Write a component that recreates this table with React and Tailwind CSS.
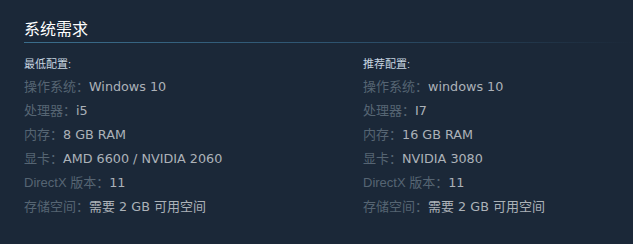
export default function App() {
  const left = [
    ["操作系统：", "Windows 10"],
    ["处理器：", "i5"],
    ["内存：", "8 GB RAM"],
    ["显卡：", "AMD 6600 / NVIDIA 2060"],
    ["DirectX 版本：", "11"],
    ["存储空间：", null],
  ];
  const right = [
    ["操作系统：", "windows 10"],
    ["处理器：", "I7"],
    ["内存：", "16 GB RAM"],
    ["显卡：", "NVIDIA 3080"],
    ["DirectX 版本：", "11"],
    ["存储空间：", null],
  ];
  const Storage = () => (
    <span className="text-[13px]">
      需要<span className="text-[12.75px]"> 2 GB </span>可用空间
    </span>
  );
  const Col = ({ title, rows, w }) => (
    <div className={w}>
      <div className="h-4 leading-4 text-[11px] text-[#c7d5e0] font-['Liberation_Sans','Noto_Sans_CJK_SC',sans-serif]">
        {title}
      </div>
      <ul className="mt-[3px]">
        {rows.map(([k, v], i) => (
          <li key={i} className="h-6 leading-6 flex items-center whitespace-nowrap">
            <span className="text-[13px] text-[#566573] font-['Liberation_Sans','Noto_Sans_CJK_SC',sans-serif]">
              {k}
            </span>
            <span className="text-[12.75px] text-[#acb2b8] font-['DejaVu_Sans','Noto_Sans_CJK_SC',sans-serif]">
              {v === null ? <Storage /> : v}
            </span>
          </li>
        ))}
      </ul>
    </div>
  );
  return (
    <div className="w-[633px] h-[244px] bg-[#1b2838] overflow-hidden pl-6 pt-[18px]">
      <div className="h-5 leading-5 text-[16px] text-white font-['Noto_Sans_CJK_SC',sans-serif]">
        系统需求
      </div>
      <div className="mt-[4px] h-px bg-gradient-to-r from-[#3b6e8c] via-[#2e5470] to-[#1b2838]" />
      <div className="mt-[13px] flex">
        <Col title="最低配置:" rows={left} w="w-[339px]" />
        <Col title="推荐配置:" rows={right} w="flex-1" />
      </div>
    </div>
  );
}
